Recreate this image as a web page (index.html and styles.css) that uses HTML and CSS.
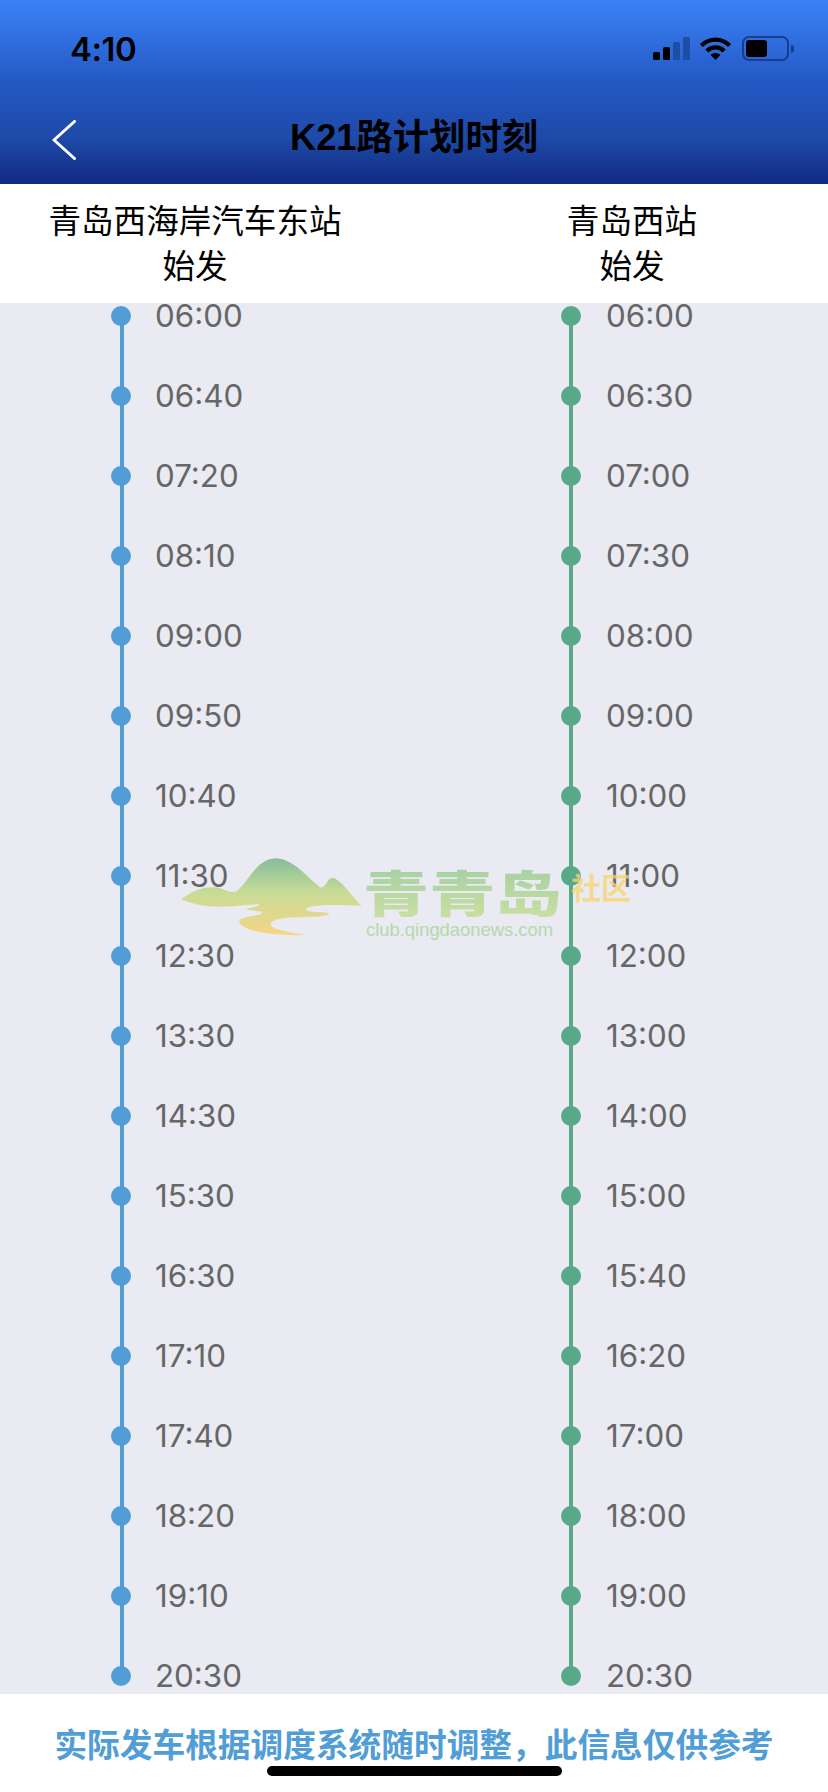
FILE: index.html
```html
<!DOCTYPE html>
<html lang="zh-CN">
<head>
<meta charset="utf-8">
<title>K21路计划时刻</title>
<link rel="stylesheet" href="styles.css">
</head>
<body>
<div class="app">
  <header class="topbar">
    <div class="status">
      <span class="clock">4:10</span>
      <div class="status-icons">
        <div class="signal"><i class="b1"></i><i class="b2"></i><i class="b3 dim"></i><i class="b4 dim"></i></div>
        <svg class="wifi" viewBox="0 0 31 23"><path d="M1.4 8.600C9.400 .6 21.600 .6 29.600 8.600" fill="none" stroke="#000" stroke-width="4.200"/><path d="M6.800 14C11.800 9.200 19.200 9.200 24.200 14" fill="none" stroke="#000" stroke-width="4.200"/><path d="M10.600 18 15.500 23 20.400 18C17.400 15.400 13.600 15.400 10.600 18Z"/></svg>
        <div class="battery"><div class="cell"><div class="charge"></div></div><div class="nub"></div></div>
      </div>
    </div>
    <nav class="nav">
      <svg class="back" viewBox="0 0 24 40"><path d="M22.500 1.500 2 20 22.500 38.500" fill="none" stroke="#fff" stroke-width="3" stroke-linecap="round" stroke-linejoin="round"/></svg>
      <h1 class="title">K21路计划时刻</h1>
    </nav>
  </header>

  <section class="stations">
    <div class="station"><div>青岛西海岸汽车东站</div><div>始发</div></div>
    <div class="station"><div>青岛西站</div><div>始发</div></div>
  </section>

  <main class="board">
    <ul class="line blue">
      <li><span class="rail"><b></b><s></s></span><span class="t">06:00</span></li>
      <li><span class="rail"><b></b><s></s></span><span class="t">06:40</span></li>
      <li><span class="rail"><b></b><s></s></span><span class="t">07:20</span></li>
      <li><span class="rail"><b></b><s></s></span><span class="t">08:10</span></li>
      <li><span class="rail"><b></b><s></s></span><span class="t">09:00</span></li>
      <li><span class="rail"><b></b><s></s></span><span class="t">09:50</span></li>
      <li><span class="rail"><b></b><s></s></span><span class="t">10:40</span></li>
      <li><span class="rail"><b></b><s></s></span><span class="t">11:30</span></li>
      <li><span class="rail"><b></b><s></s></span><span class="t">12:30</span></li>
      <li><span class="rail"><b></b><s></s></span><span class="t">13:30</span></li>
      <li><span class="rail"><b></b><s></s></span><span class="t">14:30</span></li>
      <li><span class="rail"><b></b><s></s></span><span class="t">15:30</span></li>
      <li><span class="rail"><b></b><s></s></span><span class="t">16:30</span></li>
      <li><span class="rail"><b></b><s></s></span><span class="t">17:10</span></li>
      <li><span class="rail"><b></b><s></s></span><span class="t">17:40</span></li>
      <li><span class="rail"><b></b><s></s></span><span class="t">18:20</span></li>
      <li><span class="rail"><b></b><s></s></span><span class="t">19:10</span></li>
      <li><span class="rail"><b></b></span><span class="t">20:30</span></li>
    </ul>
    <ul class="line green">
      <li><span class="rail"><b></b><s></s></span><span class="t">06:00</span></li>
      <li><span class="rail"><b></b><s></s></span><span class="t">06:30</span></li>
      <li><span class="rail"><b></b><s></s></span><span class="t">07:00</span></li>
      <li><span class="rail"><b></b><s></s></span><span class="t">07:30</span></li>
      <li><span class="rail"><b></b><s></s></span><span class="t">08:00</span></li>
      <li><span class="rail"><b></b><s></s></span><span class="t">09:00</span></li>
      <li><span class="rail"><b></b><s></s></span><span class="t">10:00</span></li>
      <li><span class="rail"><b></b><s></s></span><span class="t">11:00</span></li>
      <li><span class="rail"><b></b><s></s></span><span class="t">12:00</span></li>
      <li><span class="rail"><b></b><s></s></span><span class="t">13:00</span></li>
      <li><span class="rail"><b></b><s></s></span><span class="t">14:00</span></li>
      <li><span class="rail"><b></b><s></s></span><span class="t">15:00</span></li>
      <li><span class="rail"><b></b><s></s></span><span class="t">15:40</span></li>
      <li><span class="rail"><b></b><s></s></span><span class="t">16:20</span></li>
      <li><span class="rail"><b></b><s></s></span><span class="t">17:00</span></li>
      <li><span class="rail"><b></b><s></s></span><span class="t">18:00</span></li>
      <li><span class="rail"><b></b><s></s></span><span class="t">19:00</span></li>
      <li><span class="rail"><b></b></span><span class="t">20:30</span></li>
    </ul>
    <div class="watermark">
      <svg class="wm-hill" viewBox="0 0 1440 360">
        <defs><linearGradient id="hill" x1="0" y1="55" x2="0" y2="285" gradientUnits="userSpaceOnUse"><stop offset="0" stop-color="#85bd9c"/><stop offset=".45" stop-color="#c8dc96"/><stop offset="1" stop-color="#f6d584"/></linearGradient></defs>
        <path fill="url(#hill)" d="M63 178C95 155 125 140 165 142C195 144 205 165 232 152C265 125 290 58 345 55C400 55 440 112 482 143C502 140 500 113 520 114C545 120 580 175 605 197C555 196 480 192 445 202C432 208 440 214 460 215C485 217 510 216 507 223C495 232 420 231 375 234C340 238 325 250 335 260C355 272 400 278 438 285C370 287 290 282 255 262C230 248 232 236 262 230C295 226 312 222 305 215C285 211 255 212 262 206C280 202 305 198 296 192C250 195 200 203 150 199C115 196 85 188 63 178Z"/>
      </svg>
      <div class="wm-text">
        <div class="wm-name">青青岛</div>
        <div class="wm-url">club.qingdaonews.com</div>
      </div>
      <div class="wm-tag">社区</div>
    </div>
  </main>

  <footer class="note">
    <p>实际发车根据调度系统随时调整，此信息仅供参考</p>
    <div class="home"></div>
  </footer>
</div>
</body>
</html>
```

FILE: styles.css
```css
* { box-sizing: border-box; }
html, body { margin: 0; padding: 0; }
body {
  width: 828px;
  height: 1792px;
  overflow: hidden;
  background: #fff;
  font-family: "Inter", "Liberation Sans", "Noto Sans CJK SC", sans-serif;
}
.app { display: flex; flex-direction: column; height: 1792px; }

.topbar {
  height: 184px;
  flex: none;
  background: linear-gradient(180deg, #3b82f6 0%, #2458c4 45%, #1e4aa8 75%, #102a82 100%);
  display: flex;
  flex-direction: column;
}
.status {
  height: 98px;
  padding: 36px 34px 0 70px;
  display: flex;
  justify-content: space-between;
  align-items: flex-start;
}
.clock { font-size: 33px; line-height: 26px; font-weight: 600; color: #000; letter-spacing: -.5px; }
.status-icons { display: flex; align-items: flex-start; margin-top: 1px; }
.signal { display: flex; align-items: flex-end; gap: 3px; height: 23px; margin-right: 10px; }
.signal i { display: block; width: 7px; border-radius: 1.5px; background: #000; }
.signal .b1 { height: 8px; }
.signal .b2 { height: 13px; }
.signal .b3 { height: 18px; }
.signal .b4 { height: 23px; }
.signal .dim { background: #1d4ea5; }
.wifi { width: 31px; height: 23px; margin-right: 11px; }
.battery { display: flex; align-items: center; margin-top: -1px; }
.cell {
  width: 47px; height: 25px;
  border: 2px solid #173d8e;
  border-radius: 7px;
  padding: 2px;
}
.charge { width: 21px; height: 17px; background: #000; border-radius: 3px; }
.nub { width: 3px; height: 8px; margin-left: 2px; background: #173d8e; border-radius: 0 3px 3px 0; }

.nav { flex: 1; position: relative; display: flex; justify-content: center; }
.back { position: absolute; left: 52px; top: 22px; width: 24px; height: 40px; }
.title { margin: 16px 0 0; font-size: 36.300px; line-height: 48px; font-weight: 700; color: #000; font-family: "Liberation Sans", "Noto Sans CJK SC", sans-serif; }

.stations {
  flex: none;
  height: 119px;
  padding-top: 13px;
  display: grid;
  grid-template-columns: 390px 46px 392px;
  background: #fff;
  font-family: "Noto Sans CJK SC", sans-serif;
  font-size: 32.600px;
  line-height: 44.500px;
  color: #000;
  text-align: center;
}
.station:last-child { grid-column: 3; }

.board {
  flex: 1;
  position: relative;
  overflow: hidden;
  background: #e9eaf2;
  display: grid;
  grid-template-columns: 450px 378px;
}
.line { list-style: none; margin: 0; padding: 3px 0 0 111px; }
.line li { height: 80px; display: flex; }
.line li:last-child { height: 30px; }
.rail { width: 20px; display: flex; flex-direction: column; align-items: center; }
.rail b { display: block; flex: none; width: 20px; height: 20px; border-radius: 50%; }
.rail s { display: block; flex: 1; width: 4px; margin-top: -1px; margin-bottom: -1px; }
.blue .rail s { margin-left: 2px; }
.blue b, .blue s { background: #519dd5; }
.green b, .green s { background: #58a98a; }
.t {
  margin-left: 24px;
  font-size: 31.300px;
  line-height: 20px;
  color: #666;
}
.green .t { margin-left: 25px; }

.watermark { position: absolute; left: 160px; top: 537px; width: 480px; height: 120px; }
.wm-hill { position: absolute; left: 0; top: 0; width: 480px; height: 120px; }
.wm-text { position: absolute; left: 203px; top: 24px; }
.wm-name {
  font-family: "Noto Sans CJK SC", sans-serif;
  font-size: 63px;
  font-weight: 900;
  line-height: 70px;
  transform: scale(1.05, .77);
  transform-origin: 0 0;
  background: linear-gradient(180deg, #a5cfa6, #c9dfa0);
  -webkit-background-clip: text;
  background-clip: text;
  color: transparent;
}
.wm-url { font-family: "Liberation Sans", sans-serif; font-size: 18.400px; line-height: 22px; margin: -15px 0 0 3px; color: #b4d9ab; white-space: nowrap; }
.wm-tag {
  position: absolute; left: 411px; top: 29px;
  font-family: "Noto Sans CJK SC", sans-serif;
  font-size: 30px; font-weight: 700; line-height: 34px;
  color: rgba(248, 212, 110, .75);
  white-space: nowrap;
}

.note {
  flex: none;
  height: 98px;
  position: relative;
  background: #fff;
  display: flex;
  flex-direction: column;
  align-items: center;
}
.note p {
  margin: 28px 0 0;
  font-family: "Noto Sans CJK SC", sans-serif;
  font-size: 32.700px;
  line-height: 42px;
  font-weight: 700;
  color: #519dd5;
  white-space: nowrap;
}
.home { position: absolute; left: 267px; top: 72px; width: 295px; height: 10px; border-radius: 5px; background: #000; }
```
